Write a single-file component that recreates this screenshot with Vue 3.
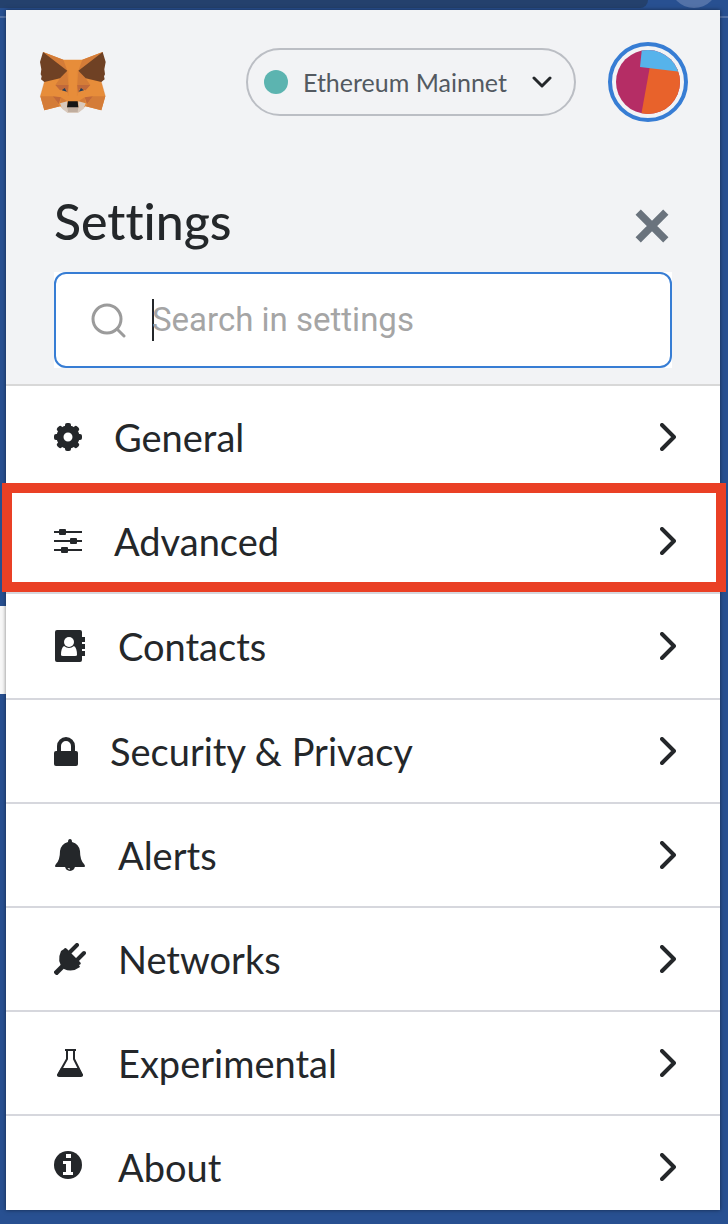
<script setup>
import { ref } from 'vue'

const query = ref('')
const items = [
  { id: 'general', label: 'General', size: 28 },
  { id: 'advanced', label: 'Advanced', size: 28 },
  { id: 'contacts', label: 'Contacts', size: 32 },
  { id: 'security', label: 'Security & Privacy', size: 24 },
  { id: 'alerts', label: 'Alerts', size: 32 },
  { id: 'networks', label: 'Networks', size: 32 },
  { id: 'experimental', label: 'Experimental', size: 32 },
  { id: 'about', label: 'About', size: 32 }
]
const teeth = [0, 45, 90, 135, 180, 225, 270, 315]
</script>

<template>
  <div class="page">
    <div class="browser-tab"></div>
    <div class="browser-bubble"></div>
    <div class="browser-line"></div>
    <div class="page-sliver"></div>

    <main class="panel">
      <header class="head">
        <div class="topbar">
          <svg class="fox" viewBox="117 152 204 189" aria-label="MetaMask" role="img">
            <path fill="#e78d3a" d="M129 155 190 178H247L308 155 304 245 316 288 304 330 257 318 234 336H203L180 318 133 330 121 288 133 245Z" />
            <path fill="#d47c38" d="M129 155 190 178 202 211ZM308 155 247 178 235 211Z" />
            <path fill="#d47c38" d="M202 211 205 254H166L180 234ZM235 211 232 254H271L257 234Z" />
            <path fill="#6f4124" d="M129 155 202 211 180 234 133 245 123 237 125 228 122 222 124 207 120 185ZM308 155 235 211 257 234 304 245 314 237 312 228 315 222 313 207 317 185Z" />
            <path fill="#c1693a" d="M166 254H206L203 279 198 266 180 270ZM271 254H231L234 279 239 266 257 270Z" />
            <path fill="#d47c38" d="M121 288H160L176 314 180 318 133 330ZM316 288H277L261 314 257 318 304 330Z" />
            <path fill="#c1693a" d="M159 288 183 291 176 312ZM278 288 254 291 261 312Z" />
            <path fill="#d47c38" d="M183 291 202 303 180 309ZM254 291 235 303 257 309Z" />
            <path fill="#273c57" d="M185 270 194 263 201 274ZM252 270 243 263 236 274Z" />
            <path fill="#d9c9bc" d="M180 309 202 303V322H235V303L257 309 251 325 234 338H203L186 325Z" />
            <path fill="#c0ad9e" d="M202 320H235L233 335H204Z" />
            <path fill="#161616" d="M204 303H233L235 321H201Z" />
            <path fill="none" stroke="#d47c38" d="M205 211V286M232 211V286M133 245 121 288M304 245 316 288" />
          </svg>
          <div class="tools">
            <button class="network" type="button">
              <span class="dot"></span>
              <span class="network-name">Ethereum Mainnet</span>
              <svg class="caret-down" viewBox="0 0 20 12" aria-hidden="true"><path d="M2 2 10 10 18 2" /></svg>
            </button>
            <button class="account" type="button" aria-label="Account">
              <svg viewBox="0 0 64 64" aria-hidden="true">
                <defs><clipPath id="disc"><circle cx="32" cy="32" r="32" /></clipPath></defs>
                <g clip-path="url(#disc)">
                  <path fill="#b52d65" d="M0 0H64V64H0Z" />
                  <path fill="#e8622b" d="M34 16 66 18V66H25Z" />
                  <path fill="#56b3eb" d="M26-2H66V22L24 17Z" />
                </g>
              </svg>
            </button>
          </div>
        </div>

        <div class="title-row">
          <h1>Settings</h1>
          <button class="close" type="button" aria-label="Close">
            <svg viewBox="0 0 32 32"><path d="M3 3 29 29M29 3 3 29" /></svg>
          </button>
        </div>

        <div class="search-back">
          <div class="search">
            <svg class="lens" viewBox="0 0 36 36" aria-hidden="true"><circle cx="17" cy="17" r="14" /><path d="M27 27 34 34" /></svg>
            <span class="cursor"></span>
            <input v-model="query" type="text" placeholder="Search in settings" aria-label="Search in settings" />
          </div>
        </div>
      </header>

      <nav class="list">
        <a v-for="item in items" :key="item.id" href="#" class="row" :class="'row-' + item.id">
          <svg class="icon" :class="'icon-' + item.size" :viewBox="`0 0 ${item.size} 32`" aria-hidden="true">
            <g v-if="item.id === 'general'">
              <rect v-for="angle in teeth" :key="angle" x="11" y="2" width="6" height="8" rx="2" :transform="`rotate(${angle} 14 16)`" />
              <circle cx="14" cy="16" r="8" fill="none" stroke="currentColor" stroke-width="7" />
            </g>
            <g v-else-if="item.id === 'advanced'">
              <path d="M0 7H28M0 16H28M0 25H28" stroke="currentColor" stroke-width="2" />
              <rect x="5" y="4" width="7" height="6" rx="1" />
              <rect x="16" y="13" width="7" height="6" rx="1" />
              <rect x="7" y="22" width="7" height="6" rx="1" />
            </g>
            <g v-else-if="item.id === 'contacts'">
              <path d="M3 0H26Q28 0 28 2V7H31V12H28V14H31V19H28V21H31V26H28V30Q28 32 26 32H3Q1 32 1 30V2Q1 0 3 0Z" />
              <circle cx="15" cy="12" r="5" fill="#fff" />
              <path fill="#fff" d="M10 16Q15 20 20 16Q23 18 23 25Q23 26 21 26H9Q7 26 7 25Q7 18 10 16Z" />
            </g>
            <g v-else-if="item.id === 'security'">
              <path d="M5 17V11A7 7 0 0 1 19 11V17" fill="none" stroke="currentColor" stroke-width="4" />
              <rect x="0" y="16" width="24" height="15" rx="2" />
            </g>
            <g v-else-if="item.id === 'alerts'">
              <path d="M16 0Q18 0 18 3Q25 5 26 12Q26 21 30 25Q32 28 30 28H2Q0 28 2 25Q6 21 6 12Q7 5 14 3Q14 0 16 0Z" />
              <path d="M11 27A5 5 0 0 0 21 27Z" />
              <path d="M14 29Q14 30 16 30" fill="none" stroke="#fff" />
            </g>
            <g v-else-if="item.id === 'networks'">
              <path d="M1 31 10 22" stroke="currentColor" stroke-width="5" />
              <path d="M10 6Q11 4 13 6L26 19Q28 21 25 22L26 24Q18 30 10 26Q2 19 7 8Z" />
              <path d="M15 10 23 2M22 18 30 10" stroke="currentColor" stroke-width="4" stroke-linecap="round" />
            </g>
            <g v-else-if="item.id === 'experimental'">
              <path d="M11 3H22M13 3V12L4 28H28L20 12V3" fill="none" stroke="currentColor" stroke-width="2" stroke-linejoin="round" />
              <path d="M7 21H25L29 28Q29 30 27 30H5Q3 30 3 28Z" />
            </g>
            <g v-else>
              <circle cx="14" cy="14" r="14" />
              <path fill="#fff" d="M12 3H17V7H12ZM9 10H17V21H19V24H9V21H12V13H9Z" />
            </g>
          </svg>
          <span class="label">{{ item.label }}</span>
          <svg class="chevron" viewBox="0 0 16 28" aria-hidden="true"><path d="M2 2 14 14 2 26" /></svg>
        </a>
      </nav>
    </main>
  </div>
</template>

<style>
body {
  margin: 0;
}
</style>

<style scoped>
* {
  box-sizing: border-box;
}

.page {
  position: relative;
  min-height: 100vh;
  padding: 10px 8px 14px 6px;
  overflow: hidden;
  background: #285091;
  color: #24272a;
  font-family: Lato, "Liberation Sans", sans-serif;
  font-variant-ligatures: none;
}

.browser-tab {
  position: absolute;
  top: 0;
  left: 0;
  right: 80px;
  height: 8px;
  border-bottom-right-radius: 16px;
  background: #24416d;
}

.browser-bubble {
  position: absolute;
  top: -40px;
  right: 10px;
  width: 48px;
  height: 48px;
  border-radius: 50%;
  background: #5372a8;
}

.browser-line {
  position: absolute;
  top: 16px;
  left: 0;
  right: 0;
  height: 2px;
  background: #5372a8;
}

.page-sliver {
  position: absolute;
  top: 606px;
  left: 0;
  width: 6px;
  height: 88px;
  background: #f8f8f8;
}

.panel {
  position: relative;
  background: #fff;
  box-shadow: 0 0 4px rgba(0, 0, 0, 0.5);
}

.head {
  padding-bottom: 16px;
  border-bottom: 2px solid #d8d8d8;
  background: #f2f3f5;
}

.topbar {
  display: flex;
  align-items: center;
  justify-content: space-between;
  padding: 32px 32px 0 33px;
}

.fox {
  width: 68px;
  height: 63px;
}

.tools {
  display: flex;
  align-items: center;
  gap: 32px;
}

button {
  border: 0;
  padding: 0;
  background: none;
  color: inherit;
  font-family: inherit;
}

.network {
  display: flex;
  align-items: center;
  width: 330px;
  height: 68px;
  padding: 0 22px 0 16px;
  border: 2px solid #bbbec4;
  border-radius: 34px;
  color: #535a61;
  font-size: 25px;
}

.dot {
  width: 24px;
  height: 24px;
  margin-right: 15px;
  border-radius: 50%;
  background: #5cb4b0;
}

.network-name {
  flex: 1;
  text-align: left;
  white-space: nowrap;
}

.caret-down {
  width: 20px;
  height: 12px;
}

.caret-down path,
.chevron path {
  fill: none;
  stroke: #24272a;
  stroke-width: 3;
  stroke-linecap: round;
  stroke-linejoin: round;
}

.account {
  width: 80px;
  height: 80px;
  padding: 4px;
  border: 4px solid #377dd4;
  border-radius: 50%;
}

.account svg {
  display: block;
}

.title-row {
  display: flex;
  align-items: center;
  justify-content: space-between;
  padding: 65px 51px 17px 48px;
}

h1 {
  margin: 0;
  font-size: 50px;
  font-weight: 500;
  line-height: 68px;
}

.close {
  width: 34px;
  height: 34px;
  margin-top: 10px;
}

.close svg {
  display: block;
}

.close path {
  stroke: #6a737d;
  stroke-width: 7;
}

.search-back {
  margin: 0 48px;
  background: #fff;
}

.search {
  display: flex;
  align-items: center;
  height: 96px;
  padding: 0 34px;
  border: 2px solid #377dd4;
  border-radius: 12px;
}

.lens {
  width: 36px;
  height: 36px;
  margin-right: 26px;
  fill: none;
  stroke: #9b9b9b;
  stroke-width: 3;
  stroke-linecap: round;
}

.cursor {
  width: 2px;
  height: 42px;
  margin-right: -2px;
  background: #24272a;
}

input {
  flex: 1;
  min-width: 0;
  padding: 0;
  border: 0;
  outline: 0;
  background: transparent;
  color: #24272a;
  font-family: Roboto, sans-serif;
  font-size: 33px;
  line-height: 44px;
}

input::placeholder {
  color: #a5a5a5;
  opacity: 1;
}

.row {
  position: relative;
  display: flex;
  align-items: center;
  padding: 30px 44px 30px 48px;
  border-bottom: 2px solid #d6d7dd;
  color: inherit;
  text-decoration: none;
}

.row-contacts {
  padding-block: 31px;
}

.row-about {
  padding-bottom: 22px;
  border-bottom: 0;
}

.row-advanced::after {
  content: "";
  position: absolute;
  inset: -7px -6px 0 -4px;
  border: 10px solid #ea4025;
}

.icon {
  height: 32px;
  fill: currentColor;
}

.icon-24 {
  width: 24px;
}

.icon-28 {
  width: 28px;
}

.icon-32 {
  width: 32px;
}

.label {
  flex: 1;
  margin-left: 32px;
  font-size: 38px;
  line-height: 42px;
}

.chevron {
  width: 16px;
  height: 28px;
}

.chevron path {
  stroke-width: 4;
}
</style>
